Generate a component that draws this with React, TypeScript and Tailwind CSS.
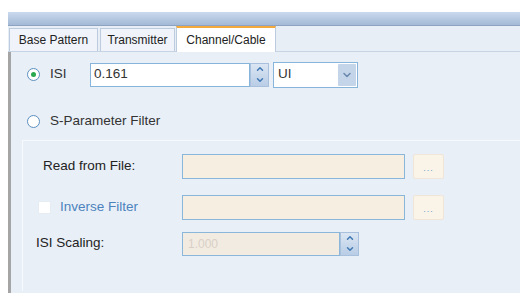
import { ChevronDown, ChevronUp } from 'lucide-react';

function Spinner({ h }: { h: string }) {
    return (
        <div className={`flex flex-col w-[19px] ${h} bg-gradient-to-b from-[#dbe6f3] to-[#b9cde6] border border-[#a8c0dc]`}>
            <div className="flex-1 flex items-center justify-center">
                <ChevronUp size={10} strokeWidth={3.5} className="text-[#3f78b4]" />
            </div>
            <div className="flex-1 flex items-center justify-center border-t border-[#c9d8ea]">
                <ChevronDown size={10} strokeWidth={3.5} className="text-[#3f78b4]" />
            </div>
        </div>
    );
}

function DotsButton() {
    return (
        <button className="w-[31px] h-[25px] ml-[8px] bg-[#faf3e8] border border-[#efe6d8] rounded-[2px] flex items-end justify-center pb-[5px] text-[9px] leading-none text-[#6aa0cf] tracking-[1px]">
            ...
        </button>
    );
}

function App() {
    return (
        <div
            className="w-[529px] h-[303px] bg-white pt-[12px] pl-[8px] pr-[9px] overflow-hidden"
            style={{ fontFamily: '"Liberation Sans", Arial, sans-serif' }}
        >
            {/* Title bar */}
            <div className="h-[14px] bg-gradient-to-b from-[#cbdaee] to-[#a3b9d6] border-b border-[#8ea3c1]" />

            {/* Tabs */}
            <div className="h-[26px] bg-[#e8eef6] flex items-end pl-[1px] border-b border-[#c6d3e3]">
                <div className="h-[23px] w-[89px] justify-center flex items-center bg-[#f0f4fa] border border-b-0 border-[#bccbdd] text-[12px] text-[#222] mr-[2px]">
                    Base Pattern
                </div>
                <div className="h-[23px] w-[75px] justify-center flex items-center bg-[#f0f4fa] border border-b-0 border-[#bccbdd] text-[12px] text-[#222] mr-[1px]">
                    Transmitter
                </div>
                <div className="h-[26px] w-[100px] justify-center flex items-center bg-white border border-b-0 border-[#bccbdd] border-t-2 border-t-[#f3a93c] text-[12px] text-[#222] -mb-[1px]">
                    Channel/Cable
                </div>
            </div>

            {/* Panel */}
            <div className="h-[241px] bg-[#e9eff7] border-l-[3px] border-[#a5a5a5] pt-[10px]">
                {/* ISI row */}
                <div className="flex items-center h-[25px] pl-[16px]">
                    <div className="w-[13px] h-[13px] rounded-full border border-[#5b8fbf] bg-white flex items-center justify-center">
                        <div className="w-[5px] h-[5px] rounded-full bg-[#2aa84f]" />
                    </div>
                    <span className="ml-[10px] w-[40px] text-[13.5px] text-[#333]">ISI</span>
                    <div className="w-[160px] h-[24px] bg-white border border-[#86b4db] flex items-center pl-[3px] text-[13.5px] text-[#333]">
                        0.161
                    </div>
                    <Spinner h="h-[24px]" />
                    <div className="ml-[4px] w-[85px] h-[26px] bg-white border border-[#86b4db] flex items-center justify-between pl-[4px] pr-[1px] text-[13.5px] text-[#333]">
                        UI
                        <div className="w-[18px] h-[22px] bg-[#c4d5ea] flex items-center justify-center rounded-[1px]">
                            <ChevronDown size={12} strokeWidth={3} className="text-[#6a88ad]" />
                        </div>
                    </div>
                </div>

                {/* S-Parameter row */}
                <div className="flex items-center h-[24px] pl-[16px] mt-[22px]">
                    <div className="w-[13px] h-[13px] rounded-full border border-[#5b8fbf] bg-white" />
                    <span className="ml-[10px] text-[13.5px] text-[#333]">S-Parameter Filter</span>
                </div>

                {/* Group */}
                <div className="ml-[11px] mt-[7px] h-[151px] border-t border-l border-[#f6f9fd] pt-[12px]">
                    <div className="flex items-center h-[26px]">
                        <span className="w-[159px] pl-[20px] text-[13.5px] text-[#222]">Read from File:</span>
                        <div className="w-[223px] h-[25px] bg-[#f7eee2] border border-[#8ab6da]" />
                        <DotsButton />
                    </div>
                    <div className="flex items-center h-[26px] mt-[15px]">
                        <div className="w-[159px] pl-[15px] flex items-center">
                            <div className="w-[13px] h-[13px] bg-white border border-[#e6ecf3]" />
                            <span className="ml-[9px] text-[13.5px] text-[#4c83bd]">Inverse Filter</span>
                        </div>
                        <div className="w-[223px] h-[25px] bg-[#f7eee2] border border-[#8ab6da]" />
                        <DotsButton />
                    </div>
                    <div className="flex items-center h-[25px] mt-[11px]">
                        <span className="w-[159px] pl-[13px] text-[13.5px] text-[#222]">ISI Scaling:</span>
                        <div className="w-[158px] h-[24px] bg-[#f2ebe2] border border-[#8ab6da] flex items-center pl-[5px] text-[12px] text-[#d8d0c6]">
                            1.000
                        </div>
                        <Spinner h="h-[24px]" />
                    </div>
                </div>
            </div>
        </div>
    );
}

export default App;
